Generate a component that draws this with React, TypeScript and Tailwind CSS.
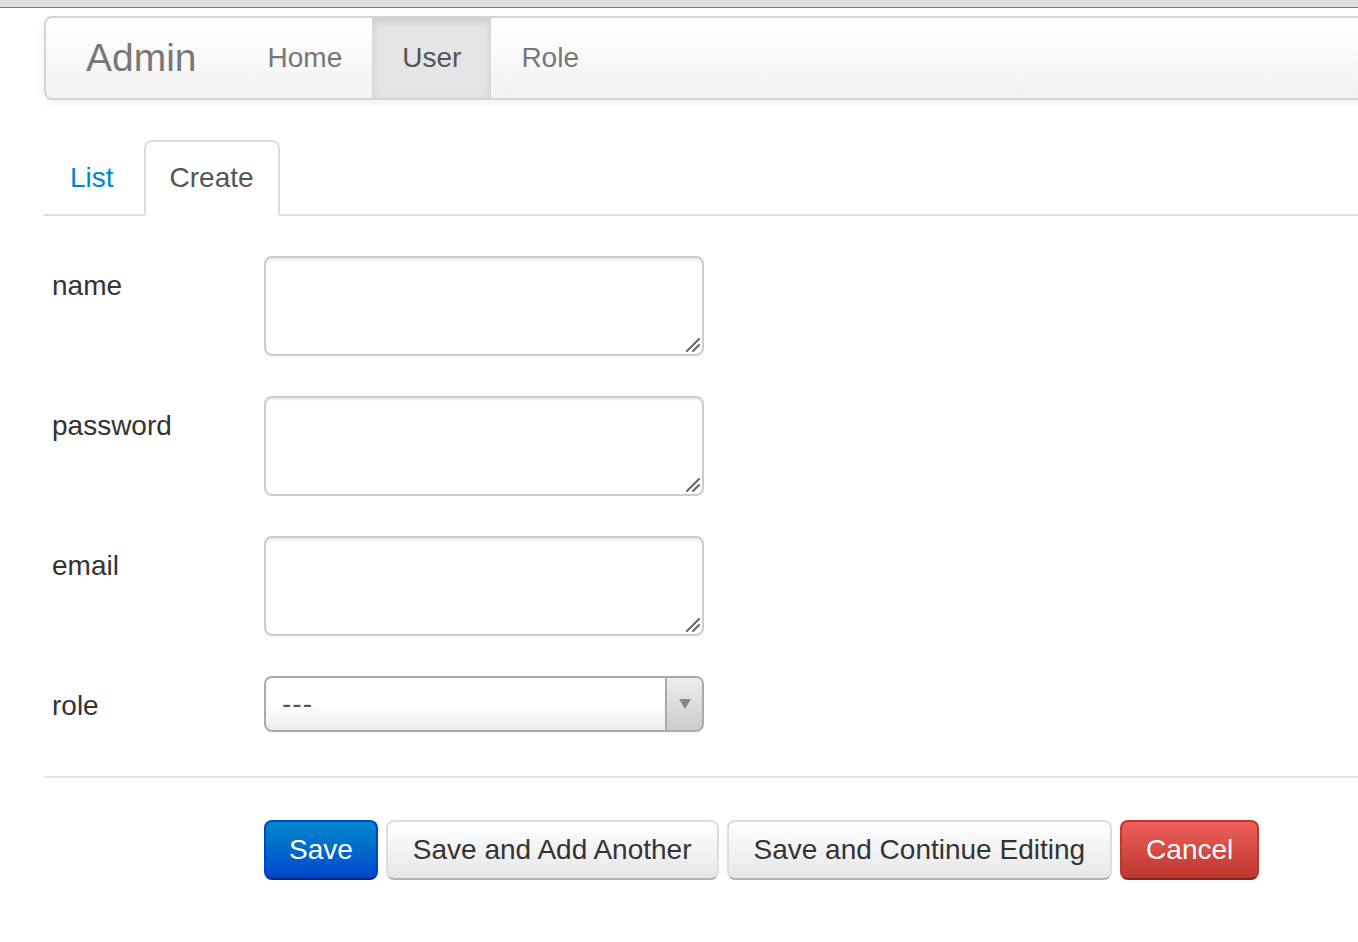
import { useState } from 'react'

const font = { fontFamily: '"Liberation Sans", Arial, sans-serif' }

type Field = { label: string; kind: 'text' | 'select' }

const fields: Field[] = [
  { label: 'name', kind: 'text' },
  { label: 'password', kind: 'text' },
  { label: 'email', kind: 'text' },
  { label: 'role', kind: 'select' },
]

export default function App() {
  const [tab, setTab] = useState('Create')
  const [active, setActive] = useState('User')

  return (
    <div className="min-h-screen w-full overflow-hidden bg-white" style={font}>
      {/* browser chrome strip */}
      <div className="h-[8px] border-b border-[#7d7d7d] bg-[#dedede]" />

      <div className="w-[1440px] pl-[44px] pt-[8px]">
        {/* navbar */}
        <div className="flex h-[84px] items-stretch rounded-l-[8px] border-2 border-[#d4d4d4] bg-gradient-to-b from-[#ffffff] to-[#f2f2f2] shadow-[0_3px_8px_rgba(0,0,0,0.07)]">
          <div className="flex items-center pl-[40px] pr-[41px] text-[39px] leading-[40px] text-[#777777]">Admin</div>
          {['Home', 'User', 'Role'].map((n) => (
            <button
              key={n}
              onClick={() => setActive(n)}
              className={`flex items-center px-[30px] text-[28px] leading-[40px] ${
                active === n
                  ? 'bg-[#e5e5e5] text-[#555555] shadow-[inset_0_3px_8px_rgba(0,0,0,0.125)]'
                  : 'text-[#777777]'
              }`}
            >
              {n}
            </button>
          ))}
        </div>

        {/* tabs */}
        <div className="mt-[40px] flex border-b-2 border-[#dddddd]">
          {['List', 'Create'].map((t) => (
            <button
              key={t}
              onClick={() => setTab(t)}
              className={`-mb-[2px] mr-[4px] rounded-t-[8px] border-2 px-[24px] py-[16px] text-[28px] leading-[40px] ${
                tab === t
                  ? 'border-[#dddddd] border-b-white bg-white text-[#555555]'
                  : 'border-transparent text-[#0088cc]'
              }`}
            >
              {t}
            </button>
          ))}
        </div>

        {/* form */}
        <div className="mt-[40px] flex flex-col gap-[40px]">
          {fields.map((f) => (
            <div key={f.label} className="flex">
              <label className="w-[220px] pl-[8px] pt-[10px] text-[28px] leading-[40px] text-[#333333]">{f.label}</label>
              {f.kind === 'text' ? (
                <div className="relative h-[100px] w-[440px]">
                  <textarea className="h-full w-full resize-none rounded-[8px] border-2 border-[#cccccc] bg-white px-[12px] py-[8px] text-[28px] shadow-[inset_0_2px_2px_rgba(0,0,0,0.075)] outline-none" />
                  <svg className="pointer-events-none absolute bottom-[4px] right-[4px]" width="14" height="14" viewBox="0 0 14 14">
                    <path d="M13 1 L1 13 M13 7 L7 13" stroke="#666666" strokeWidth="2" strokeLinecap="round" />
                  </svg>
                </div>
              ) : (
                <div className="flex h-[56px] w-[440px] overflow-hidden rounded-[8px] border-2 border-[#aaaaaa] bg-gradient-to-b from-[#ffffff] from-50% to-[#eeeeee]">
                  <div className="flex flex-1 items-center pl-[16px] text-[28px] tracking-[1px] text-[#555555]">---</div>
                  <div className="flex w-[37px] items-center justify-center border-l-2 border-[#aaaaaa] bg-gradient-to-b from-[#eeeeee] to-[#cccccc]">
                    <svg width="12" height="10" viewBox="0 0 12 10">
                      <path d="M0 0 L12 0 L6 10 Z" fill="#888888" />
                    </svg>
                  </div>
                </div>
              )}
            </div>
          ))}
        </div>

        {/* actions */}
        <div className="mt-[44px] flex gap-[8px] border-t-2 border-[#e5e5e5] pl-[220px] pt-[42px]">
          <button className="h-[60px] rounded-[8px] border-2 border-[#0044cc] border-b-[#002a80] bg-gradient-to-b from-[#0088cc] to-[#0044cc] px-[23px] text-[28px] text-white">
            Save
          </button>
          <button className="h-[60px] rounded-[8px] border-2 border-[#dddddd] border-b-[#b3b3b3] bg-gradient-to-b from-[#ffffff] to-[#e6e6e6] px-[25px] text-[28px] text-[#333333]">
            Save and Add Another
          </button>
          <button className="h-[60px] rounded-[8px] border-2 border-[#dddddd] border-b-[#b3b3b3] bg-gradient-to-b from-[#ffffff] to-[#e6e6e6] px-[25px] text-[28px] text-[#333333]">
            Save and Continue Editing
          </button>
          <button className="h-[60px] rounded-[8px] border-2 border-[#bd362f] border-b-[#802420] bg-gradient-to-b from-[#ee5f5b] to-[#bd362f] px-[24px] text-[28px] text-white">
            Cancel
          </button>
        </div>
      </div>
    </div>
  )
}
